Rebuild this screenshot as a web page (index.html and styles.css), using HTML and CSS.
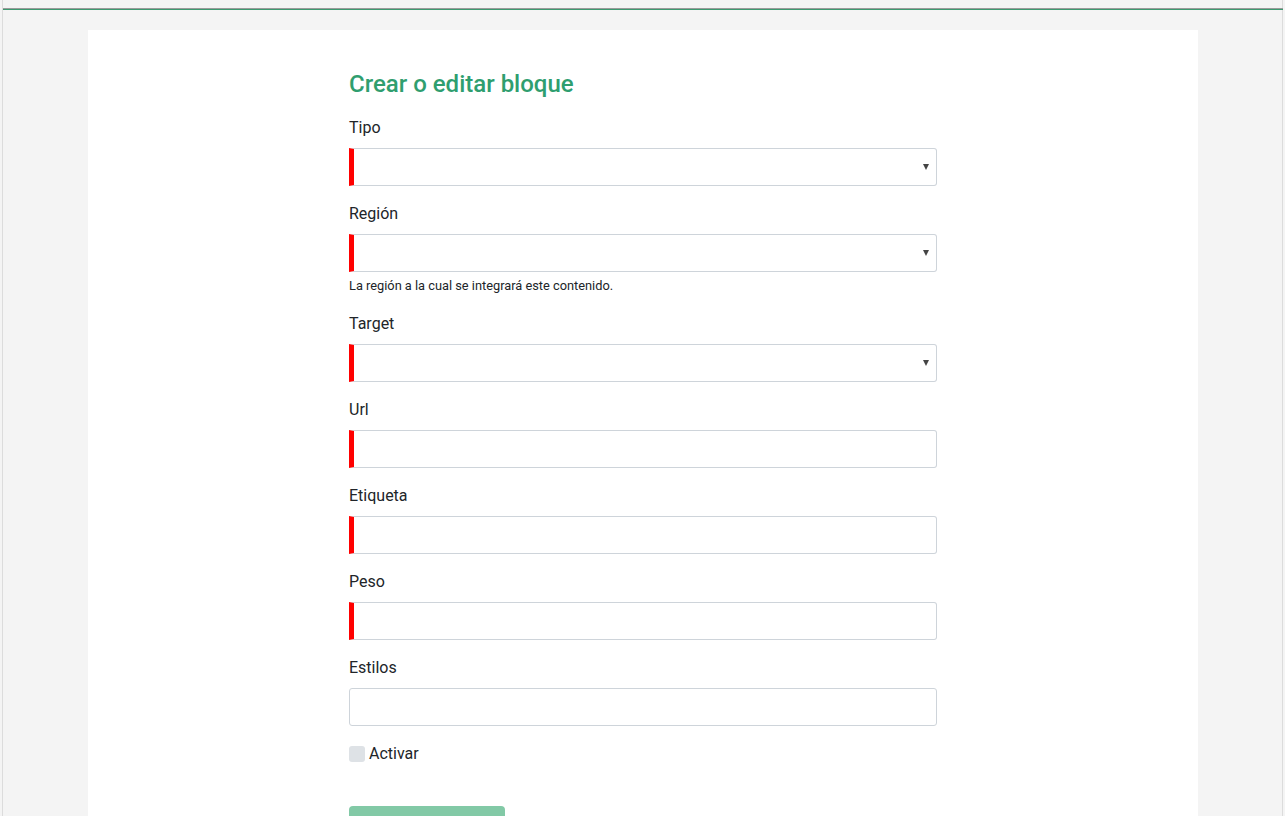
FILE: index.html
```html
<!DOCTYPE html>
<html lang="es">
<head>
<meta charset="utf-8">
<title>Crear o editar bloque</title>
<link rel="stylesheet" href="styles.css">
</head>
<body>
<div class="frame">
  <div class="topbar"></div>
  <main class="page">
    <section class="card">
      <form class="form">
        <h2 class="title">Crear o editar bloque</h2>
        <div class="group">
          <label class="label">Tipo</label>
          <div class="control select required"><span class="caret"></span></div>
        </div>
        <div class="group">
          <label class="label">Región</label>
          <div class="control select required"><span class="caret"></span></div>
          <small class="help">La región a la cual se integrará este contenido.</small>
        </div>
        <div class="group">
          <label class="label">Target</label>
          <div class="control select required"><span class="caret"></span></div>
        </div>
        <div class="group">
          <label class="label">Url</label>
          <div class="control required"></div>
        </div>
        <div class="group">
          <label class="label">Etiqueta</label>
          <div class="control required"></div>
        </div>
        <div class="group">
          <label class="label">Peso</label>
          <div class="control required"></div>
        </div>
        <div class="group">
          <label class="label">Estilos</label>
          <div class="control"></div>
        </div>
        <div class="group check">
          <span class="box"></span><span class="check-label">Activar</span>
        </div>
        <div class="button"></div>
      </form>
    </section>
  </main>
</div>
</body>
</html>
```

FILE: styles.css
```css
html, body {
  margin: 0;
  padding: 0;
  background: #f4f4f4;
  font-family: Roboto, "Liberation Sans", sans-serif;
  color: #212529;
  height: 100%;
  overflow: hidden;
}
.frame {
  margin: 0 2px;
  border-left: 1px solid #dcdcdc;
  border-right: 1px solid #dcdcdc;
  min-height: 816px;
  box-sizing: border-box;
}
.topbar {
  height: 8px;
  border-bottom: 1px solid #9a9a9a;
  box-shadow: 0 1px 0 #3d9a70;
  margin-right: -1px;
}
.page {
  padding: 21px 84px 0 85px;
}
.card {
  background: #fff;
  min-height: 800px;
  display: flex;
  justify-content: center;
  padding-top: 40px;
}
.form {
  width: 588px;
}
.title {
  margin: 0 0 17px;
  font-size: 24px;
  font-weight: 500;
  line-height: 1.2;
  color: #2f9e6f;
}
.group {
  margin-bottom: 16px;
  display: flex;
  flex-direction: column;
}
.label {
  font-size: 16px;
  line-height: 24px;
  margin-bottom: 8px;
}
.control {
  position: relative;
  height: 38px;
  box-sizing: border-box;
  border: 1px solid #ced4da;
  border-radius: 3px;
  background: #fff;
}
.control.required {
  border-left: 5px solid #f00;
  border-radius: 0 3px 3px 0;
}
.caret {
  position: absolute;
  right: 7px;
  top: 15px;
  width: 0;
  height: 0;
  border-left: 3px solid transparent;
  border-right: 3px solid transparent;
  border-top: 6px solid #444;
}
.help {
  font-size: 12.8px;
  line-height: 20px;
  margin-top: 4px;
}
.check {
  flex-direction: row;
  align-items: center;
  height: 24px;
  margin-bottom: 40px;
}
.box {
  width: 16px;
  height: 16px;
  border-radius: 3px;
  background: #dee2e6;
  margin-right: 4px;
}
.check-label {
  font-size: 16px;
  line-height: 24px;
}
.button {
  width: 156px;
  height: 38px;
  border-radius: 4px;
  background: #82c9a6;
}
```
